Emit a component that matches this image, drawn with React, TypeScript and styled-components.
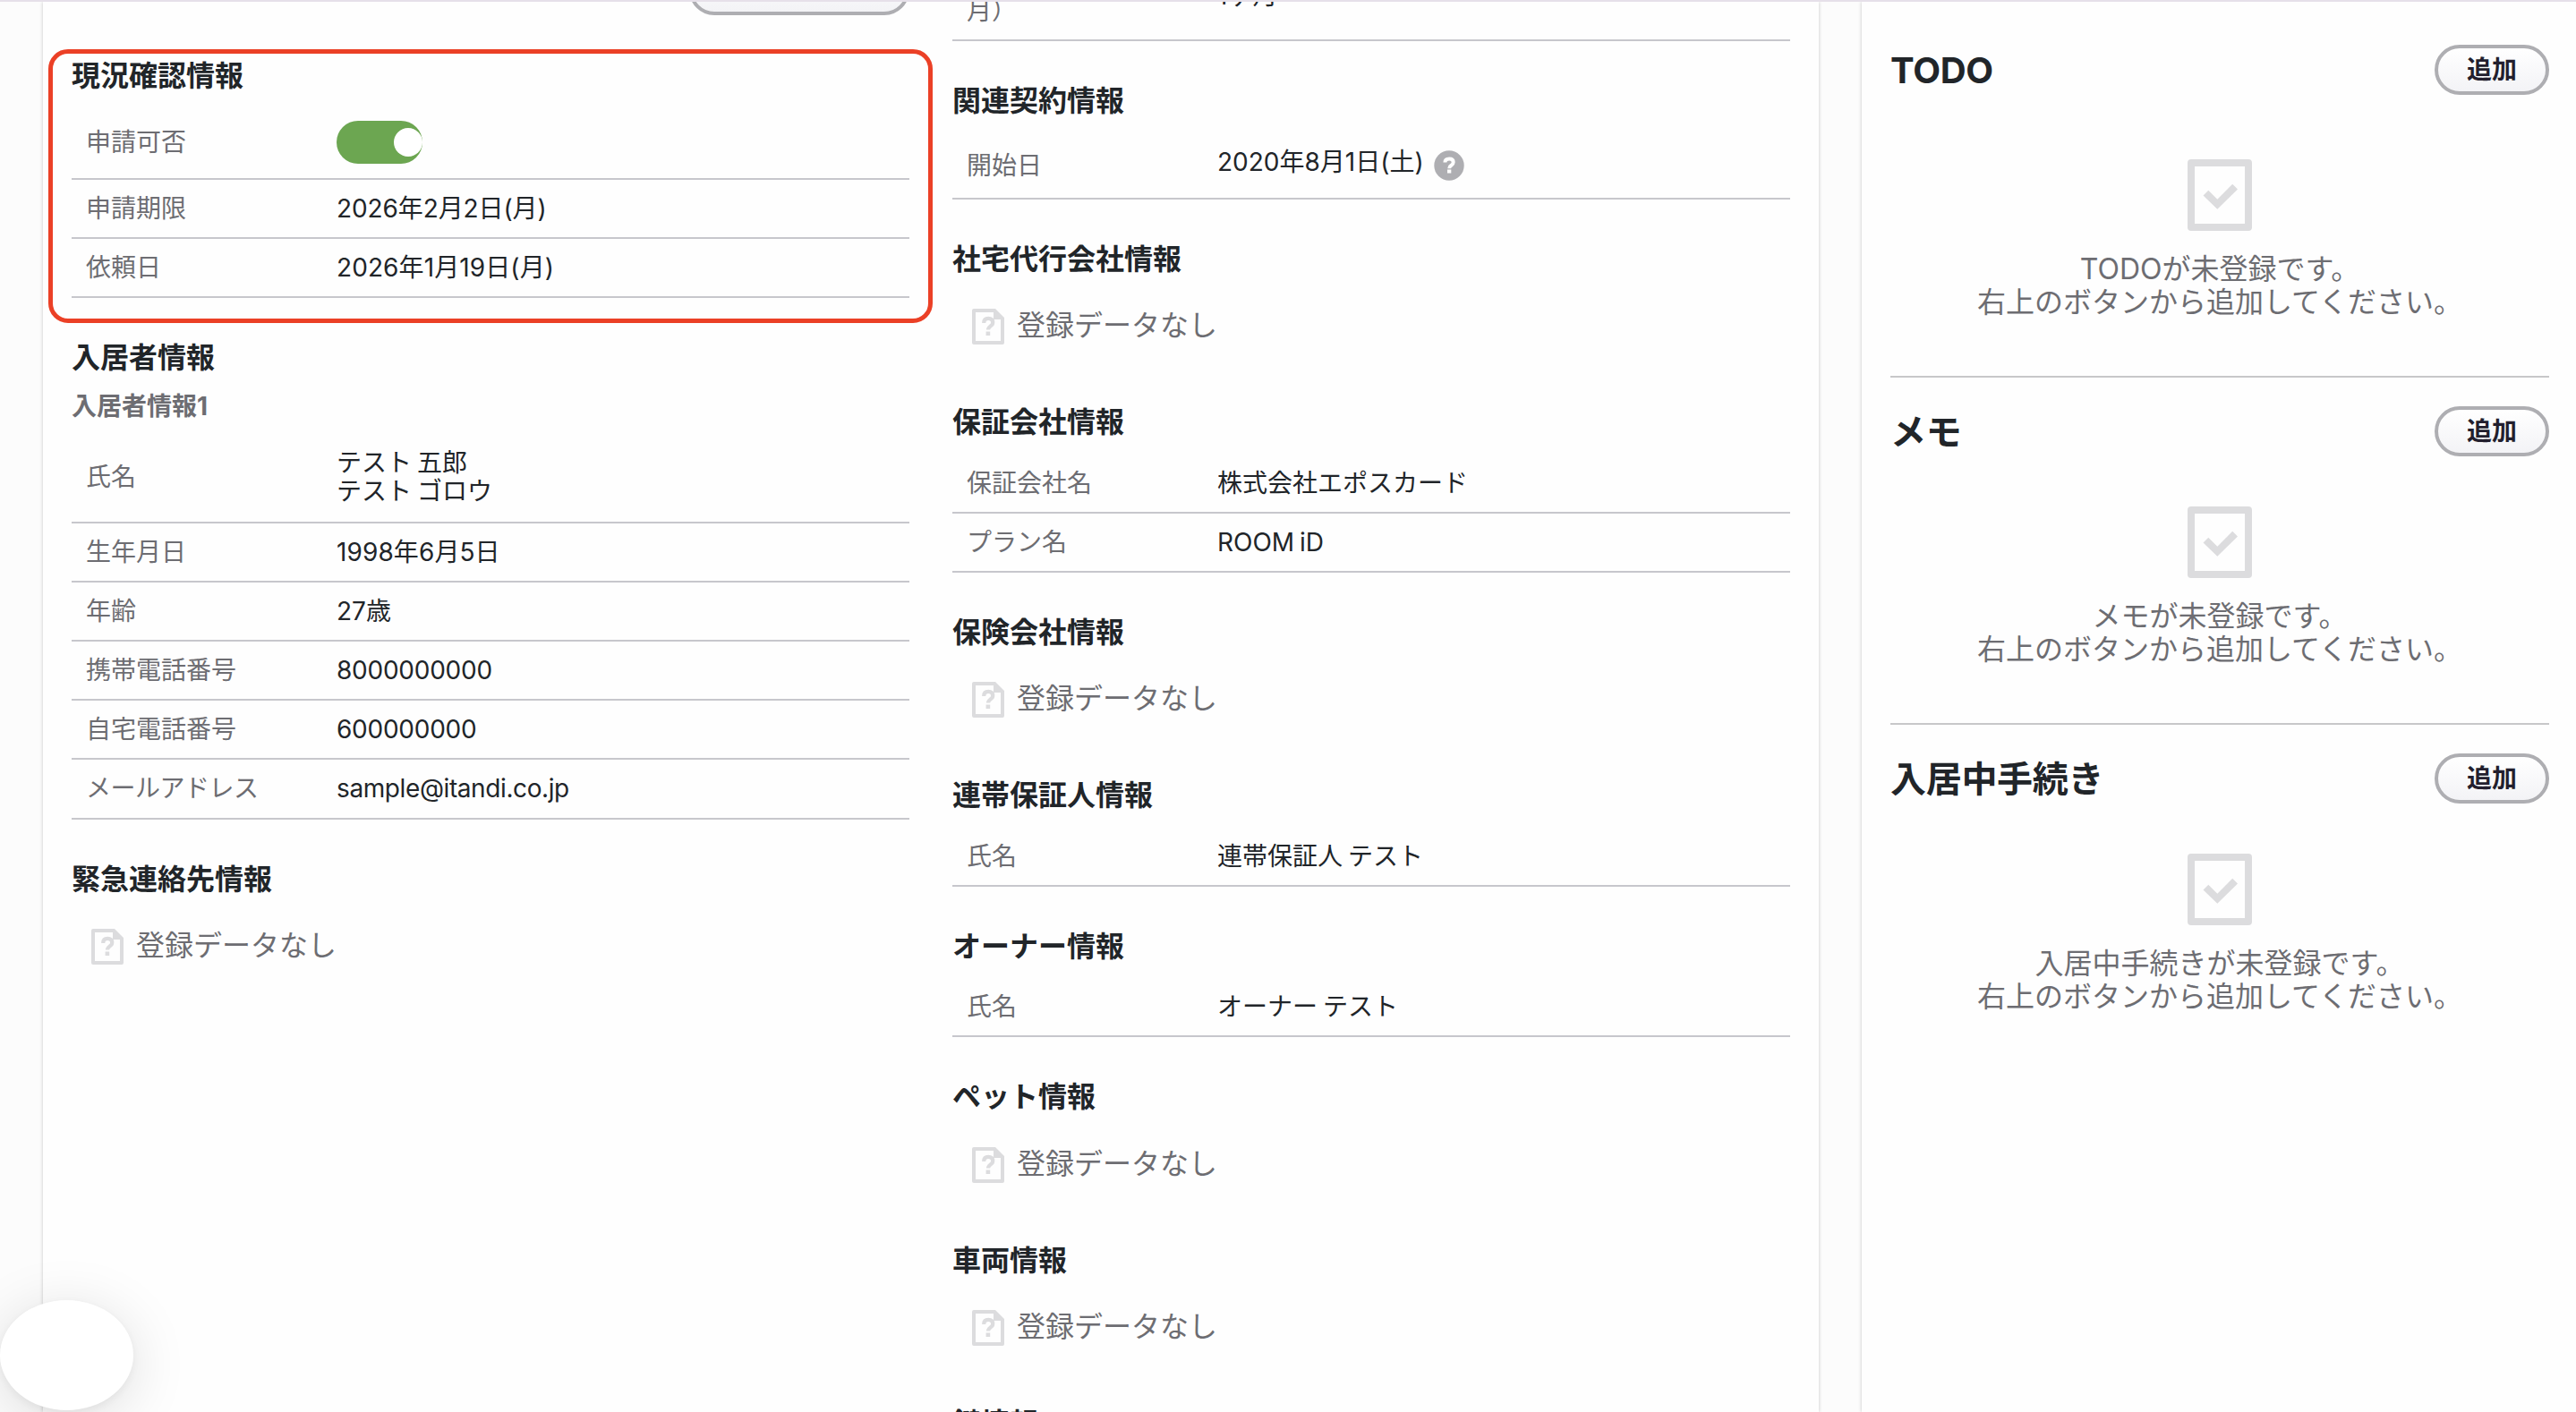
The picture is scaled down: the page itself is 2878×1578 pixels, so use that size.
import React from "react";
import styled, { createGlobalStyle } from "styled-components";

const GlobalStyle = createGlobalStyle`
  * { box-sizing: border-box; }
  html, body { margin: 0; padding: 0; overflow: hidden; }
  body {
    font-family: Inter, "Noto Sans CJK JP", sans-serif;
    color: #212529;
    background: #fcfcfc;
  }
`;

const Page = styled.div`
  display: flex;
  flex-direction: column;
  width: 100%;
  height: 1578px;
  overflow: hidden;
`;

const TopLine = styled.div`
  flex: none;
  height: 2px;
  background: #e6e0e9;
`;

const Body = styled.div`
  flex: 1;
  min-height: 0;
  display: flex;
  gap: 48px;
  padding-left: 48px;
`;

const Panel = styled.section`
  background: #fefefe;
  box-shadow: 0 0 4px rgba(0, 0, 0, 0.22);
`;

const DetailPanel = styled(Panel)`
  flex: none;
  width: 1984px;
  display: flex;
  gap: 22px;
  padding: 0 32px 0 6px;
  clip-path: inset(0 -6px);
`;

const SidePanel = styled(Panel)`
  flex: 1;
  padding: 48px 30px 0 32px;
  clip-path: inset(0 0 0 -6px);
`;

const LeftColumn = styled.div`
  flex: none;
  width: 988px;
  display: flex;
  flex-direction: column;
`;

const MiddleColumn = styled.div`
  flex: none;
  width: 936px;
  height: 1576px;
  overflow: hidden;
`;

const CutButtonRow = styled.div`
  height: 53px;
  padding-right: 26px;
  display: flex;
  justify-content: flex-end;
  align-items: flex-start;
  overflow: hidden;
`;

const Button = styled.button<{ $width?: number; $lift?: number }>`
  flex: none;
  width: ${(p) => p.$width ?? 128}px;
  height: 56px;
  margin: ${(p) => -(p.$lift ?? 0)}px 0 0;
  padding: 0;
  border: 4px solid #aeaeb2;
  border-radius: 28px;
  background: linear-gradient(#ffffff, #f3f3f6);
  background-clip: padding-box;
  color: #231f2e;
  font: 600 28px/48px Inter, "Noto Sans CJK JP", sans-serif;
`;

const Highlight = styled.div`
  height: 306px;
  padding: 0 21px;
  border: 5px solid #eb4026;
  border-radius: 22px;
  margin-bottom: 4px;
`;

const Plain = styled.div`
  padding: 0 26px;
`;

const Heading = styled.h2<{ $height?: number; $line?: number }>`
  margin: 0;
  height: ${(p) => p.$height ?? 70.5}px;
  line-height: ${(p) => p.$line ?? 70}px;
  font-size: 32px;
  font-weight: 700;
`;

const SubHeading = styled.h3`
  margin: 0;
  height: 48px;
  font-size: 28px;
  line-height: 36px;
  font-weight: 700;
  color: #6d6d72;
`;

const Rows = styled.dl`
  margin: 0 0 32px;
`;

const Row = styled.div<{ $height?: number }>`
  display: flex;
  align-items: center;
  height: ${(p) => p.$height ?? 66}px;
  border-bottom: 2px solid #c7c7cc;
  font-size: 28px;
  line-height: 32px;
`;

const Label = styled.dt<{ $track?: number }>`
  width: 296px;
  padding-left: 16px;
  white-space: nowrap;
  color: #6d6d72;
  letter-spacing: ${(p) => p.$track ?? 0}px;
`;

const Value = styled.dd<{ $track?: number }>`
  display: flex;
  align-items: center;
  margin: 0;
  white-space: pre-line;
  letter-spacing: ${(p) => p.$track ?? 0}px;
  word-spacing: -2px;
`;

const Toggle = styled.span`
  display: flex;
  justify-content: flex-end;
  align-items: center;
  width: 96px;
  height: 48px;
  border-radius: 24px;
  background: #6ca651;
`;

const Knob = styled.span`
  width: 32px;
  height: 32px;
  border-radius: 50%;
  background: #fff;
`;

const EmptyBox = styled.div`
  display: flex;
  align-items: center;
  height: 80px;
  margin-bottom: 32px;
  padding-left: 22px;
  gap: 14px;
  font-size: 32px;
  line-height: 40px;
  color: #6d6d72;
`;

const EmptyText = styled.span`
  padding-bottom: 2px;
`;

const SideHeader = styled.header`
  display: flex;
  align-items: center;
  justify-content: space-between;
  height: 56px;
`;

const SideTitle = styled.h1`
  margin: 0;
  padding-top: 2px;
  font-size: 40px;
  line-height: 56px;
  font-weight: 700;
  letter-spacing: -0.3px;
`;

const SideSection = styled.section<{ $gap: number; $last?: boolean }>`
  padding-bottom: 64px;
  margin-bottom: 32px;
  border-bottom: ${(p) => (p.$last ? "0" : "2px solid #c7c7c9")};
  ${SideHeader} {
    margin-bottom: ${(p) => p.$gap}px;
  }
`;

const SideEmpty = styled.div`
  display: flex;
  flex-direction: column;
  align-items: center;
  gap: 24px;
  color: #6d6d72;
  font-size: 32px;
  line-height: 37px;
  text-align: center;
  white-space: pre-line;
`;

const ChatBubble = styled.div`
  position: fixed;
  left: 0;
  top: 1453px;
  width: 149px;
  height: 123px;
  border-radius: 50%;
  background: #fff;
  box-shadow: 0 3px 12px rgba(0, 0, 0, 0.06), 0 10px 64px rgba(0, 0, 0, 0.13);
`;

const FileIcon = () => (
  <svg width="36" height="40" viewBox="0 0 36 40">
    <path
      fillRule="evenodd"
      fill="#dcdcde"
      d="M2 0H26L36 10V38Q36 40 34 40H2Q0 40 0 38V2Q0 0 2 0ZM4 4V36H32V12H24V4Z"
    />
    <path
      d="M13.200 16Q13.200 10.900 18.200 10.900Q23.200 10.900 23.200 15.500Q23.200 17.800 20.500 19.600Q18 21.400 18 23.600"
      fill="none"
      stroke="#dcdcde"
      strokeWidth="4.200"
    />
    <rect x="15.600" y="25.500" width="4.600" height="4.500" fill="#dcdcde" />
  </svg>
);

const DateWithHelp = styled.span`
  display: flex;
  align-items: center;
  gap: 11px;
  margin-bottom: 8px;
`;

const HelpSvg = styled.svg`
  margin-top: 8px;
`;

const HelpIcon = () => (
  <HelpSvg width="34" height="34" viewBox="0 0 34 34">
    <circle cx="17" cy="17" r="16.700" fill="#aeaeb2" />
    <path
      d="M12.400 13.500Q12.400 9.400 17.200 9.400Q21.700 9.400 21.700 13.200Q21.700 15.200 19.400 16.800Q17.200 18.200 17.200 20.200"
      fill="none"
      stroke="#fff"
      strokeWidth="4"
    />
    <rect x="15" y="21.500" width="4.300" height="4" fill="#fff" />
  </HelpSvg>
);

const CheckIcon = () => (
  <svg width="72" height="80" viewBox="0 0 72 80">
    <path fillRule="evenodd" d="M4 0H68Q72 0 72 4V76Q72 80 68 80H4Q0 80 0 76V4Q0 0 4 0ZM8 8V72H64V8Z" fill="#dcdcde" />
    <path d="M17.500 40.500L23.300 34.700L33.300 44.700L50.200 27.800L56 33.500L33.300 55.800Z" fill="#dcdcde" />
  </svg>
);

const NoData = () => (
  <EmptyBox>
    <FileIcon />
    <EmptyText>登録データなし</EmptyText>
  </EmptyBox>
);

type Item = { label: string; value: React.ReactNode; height?: number; track?: number; labelTrack?: number };

const DataRows = ({ items }: { items: Item[] }) => (
  <Rows>
    {items.map((item) => (
      <Row key={item.label} $height={item.height}>
        <Label $track={item.labelTrack}>{item.label}</Label>
        <Value $track={item.track}>{item.value}</Value>
      </Row>
    ))}
  </Rows>
);

const ClippedRow = styled(Row)`
  height: 44px;
  margin-bottom: 32px;
  align-items: flex-start;
`;

const ClippedLabel = styled(Label)`
  margin-top: -6px;
`;

const ClippedValue = styled(Value)`
  margin-top: -23px;
`;

const statusRows: Item[] = [
  { label: "申請可否", value: <Toggle><Knob /></Toggle>, height: 82 },
  { label: "申請期限", value: "2026年2月2日(月)", track: -0.1 },
  { label: "依頼日", value: "2026年1月19日(月)", track: 0.1 },
];

const residentRows: Item[] = [
  { label: "氏名", value: "テスト 五郎\nテスト ゴロウ", height: 101 },
  { label: "生年月日", value: "1998年6月5日", track: 0.1 },
  { label: "年齢", value: "27歳" },
  { label: "携帯電話番号", value: "8000000000", track: -0.25 },
  { label: "自宅電話番号", value: "600000000", track: -0.25 },
  { label: "メールアドレス", value: "sample@itandi.co.jp", height: 67, track: -0.4, labelTrack: -0.5 },
];

const startDate = (
  <DateWithHelp>
    2020年8月1日(土)
    <HelpIcon />
  </DateWithHelp>
);

const contractSections: { title: string; items?: Item[] }[] = [
  { title: "関連契約情報", items: [{ label: "開始日", value: startDate, height: 74 }] },
  { title: "社宅代行会社情報" },
  {
    title: "保証会社情報",
    items: [
      { label: "保証会社名", value: "株式会社エポスカード" },
      { label: "プラン名", value: "ROOM iD" },
    ],
  },
  { title: "保険会社情報" },
  { title: "連帯保証人情報", items: [{ label: "氏名", value: "連帯保証人 テスト" }] },
  { title: "オーナー情報", items: [{ label: "氏名", value: "オーナー テスト" }] },
  { title: "ペット情報" },
  { title: "車両情報" },
  { title: "鍵情報" },
];

const sideSections = ["TODO", "メモ", "入居中手続き"];

export default function App() {
  return (
    <>
      <GlobalStyle />
      <Page>
        <TopLine />
        <Body>
          <DetailPanel>
            <LeftColumn>
              <CutButtonRow>
                <Button $width={246} $lift={41} />
              </CutButtonRow>
              <Highlight>
                <Heading $height={59} $line={49}>現況確認情報</Heading>
                <DataRows items={statusRows} />
              </Highlight>
              <Plain>
                <Heading>入居者情報</Heading>
                <SubHeading>入居者情報1</SubHeading>
                <DataRows items={residentRows} />
                <Heading>緊急連絡先情報</Heading>
                <NoData />
              </Plain>
            </LeftColumn>
            <MiddleColumn>
              <ClippedRow>
                <ClippedLabel>月）</ClippedLabel>
                <ClippedValue>1ヶ月</ClippedValue>
              </ClippedRow>
              {contractSections.map((s) => (
                <React.Fragment key={s.title}>
                  <Heading>{s.title}</Heading>
                  {s.items ? <DataRows items={s.items} /> : <NoData />}
                </React.Fragment>
              ))}
            </MiddleColumn>
          </DetailPanel>
          <SidePanel>
            {sideSections.map((title, i) => (
              <SideSection key={title} $gap={i === 0 ? 72 : 56} $last={i === 2}>
                <SideHeader>
                  <SideTitle>{title}</SideTitle>
                  <Button>追加</Button>
                </SideHeader>
                <SideEmpty>
                  <CheckIcon />
                  <div>{`${title}が未登録です。\n右上のボタンから追加してください。`}</div>
                </SideEmpty>
              </SideSection>
            ))}
          </SidePanel>
        </Body>
        <ChatBubble />
      </Page>
    </>
  );
}
